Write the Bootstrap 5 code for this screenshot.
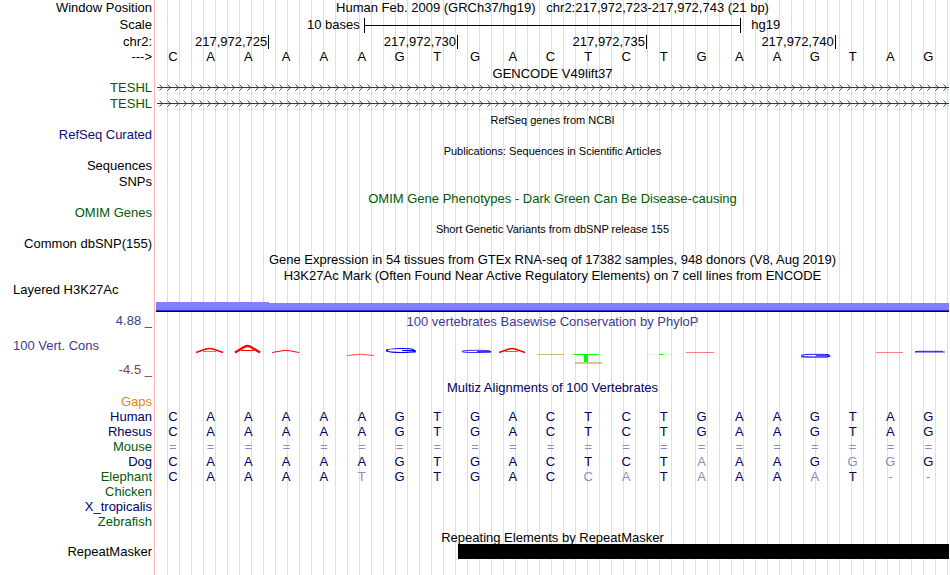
<!DOCTYPE html>
<html lang="en">
  <head>
    <meta charset="UTF-8" />
    <meta name="viewport" content="width=device-width, initial-scale=1.0" />
    <title>Human chr2:217,972,723-217,972,743</title>
    <link
      href="https://cdn.jsdelivr.net/npm/bootstrap@5.3.0/dist/css/bootstrap.min.css"
      rel="stylesheet"
    />
    <style>
      body {
        background: #fff;
        color: #000;
        font-family: "Liberation Sans", Arial, sans-serif;
        font-size: 13px;
        line-height: 14px;
      }
      /* guide lines every 12px, the label column covers its own part */
      .browser {
        background: linear-gradient(to right, #dcdcf8 1px, transparent 1px)
          167px 0 / 12px 100%;
      }
      .track {
        display: flex;
        height: 15px;
        white-space: pre;
      }
      .h-s { height: 14px; }
      .h-m { height: 16px; }
      .h-l { height: 17px; }
      .h-xl { height: 18px; }
      .h-logo { height: 31px; }
      .side {
        flex: 0 0 155px;
        display: flex;
        align-items: center;
        justify-content: flex-end;
        padding-right: 2px;
        background: #fff;
        border-right: 1px solid #ffb4b4;
        box-shadow: 1px 0 #fff;
      }
      .side-left {
        justify-content: flex-start;
        padding-left: 13px;
      }
      .data {
        flex: 1 1 0;
        min-width: 0;
        display: flex;
        align-items: center;
        margin: 0 1px;
      }
      .data svg { display: block; width: 100%; }
      .heading {
        justify-content: center;
        padding-top: 2px;
      }
      .minor {
        font-size: 11px;
        padding-top: 0;
      }
      .bases { margin: 0 3px 0 -1px; }
      .bases span { flex: 1 1 0; text-align: center; }
      .bases .diff { color: #8c8cbe; }
      .navy { color: #000064; }
      .curated { color: #0c0c78; }
      .green { color: #005a0a; }
      .cons { color: #3c3c8c; }
      .minus { color: #8c3c3c; }
      .gaps { color: #e08a10; }
      .pad-scale { width: calc(100% * 5.5 / 21); }
      .scale-name { padding-left: 10px; }
      .scale-bar {
        width: calc(100% * 10 / 21);
        height: 15px;
        border: solid #000;
        border-width: 0 1px;
        background: linear-gradient(#000, #000) center / 100% 1px no-repeat;
      }
      .tick {
        width: calc(100% * 5 / 21);
        height: 14px;
        padding-right: 1px;
        border-right: 1px solid #000;
        text-align: right;
      }
      .tick-first { width: calc(100% * 3 / 21); }
      .signal { align-items: flex-end; }
      .signal div {
        height: 9px;
        flex: 18 1 0;
        background: #8080ff;
        border-bottom: 1px solid #100040;
        box-shadow: inset 0 -1px #2828d0;
      }
      .signal .peak { height: 10px; flex-grow: 3; }
      .repeat-gap { flex: 8 1 0; }
      .repeat { flex: 13 1 0; height: 15px; background: #000; }
    </style>
  </head>
  <body>
    <main class="browser d-flex flex-column min-vh-100">
      <div class="track h-m">
        <div class="side">Window Position</div>
        <div class="data heading pt-0">Human Feb. 2009 (GRCh37/hg19)   chr2:217,972,723-217,972,743 (21 bp)</div>
      </div>
      <div class="track h-xl">
        <div class="side">Scale</div>
        <div class="data">
          <div class="pad-scale text-end pe-1">10 bases</div>
          <div class="scale-bar"></div>
          <div class="pad-scale scale-name">hg19</div>
        </div>
      </div>
      <div class="track">
        <div class="side">chr2:</div>
        <div class="data">
          <div class="tick tick-first">217,972,725</div>
          <div class="tick">217,972,730</div>
          <div class="tick">217,972,735</div>
          <div class="tick">217,972,740</div>
        </div>
      </div>
      <div class="track h-m">
        <div class="side">---&gt;</div>
        <div class="data bases" data-seq="CAAAAAGTGACTCTGAAGTAG"></div>
      </div>
      <div class="track">
        <div class="side"></div>
        <div class="data heading">GENCODE V49lift37</div>
      </div>
      <div class="track h-m">
        <div class="side green">TESHL</div>
        <div class="data align-items-start">
          <svg height="15" aria-hidden="true">
            <defs>
              <pattern id="strand" width="8" height="15" patternUnits="userSpaceOnUse">
                <path d="M3.500 4.500l3 3l-3 3" fill="none" stroke="#005a0a" stroke-width=".9" />
              </pattern>
            </defs>
            <rect width="100%" height="15" fill="url(#strand)" />
            <rect x="1" y="7" width="100%" height="1" fill="#005a0a" />
          </svg>
        </div>
      </div>
      <div class="track">
        <div class="side green">TESHL</div>
        <div class="data align-items-start">
          <svg height="15" aria-hidden="true">
            <rect width="100%" height="15" fill="url(#strand)" />
            <rect x="1" y="7" width="100%" height="1" fill="#005a0a" />
          </svg>
        </div>
      </div>
      <div class="track h-l">
        <div class="side"></div>
        <div class="data heading minor">RefSeq genes from NCBI</div>
      </div>
      <div class="track h-s"><div class="side curated">RefSeq Curated</div></div>
      <div class="track h-l">
        <div class="side"></div>
        <div class="data heading minor">Publications: Sequences in Scientific Articles</div>
      </div>
      <div class="track h-s"><div class="side">Sequences</div></div>
      <div class="track h-l"><div class="side">SNPs</div></div>
      <div class="track h-m">
        <div class="side"></div>
        <div class="data heading green">OMIM Gene Phenotypes - Dark Green Can Be Disease-causing</div>
      </div>
      <div class="track h-s"><div class="side green">OMIM Genes</div></div>
      <div class="track h-l">
        <div class="side"></div>
        <div class="data heading minor">Short Genetic Variants from dbSNP release 155</div>
      </div>
      <div class="track h-s"><div class="side">Common dbSNP(155)</div></div>
      <div class="track h-m">
        <div class="side"></div>
        <div class="data heading">Gene Expression in 54 tissues from GTEx RNA-seq of 17382 samples, 948 donors (V8, Aug 2019)</div>
      </div>
      <div class="track h-m">
        <div class="side"></div>
        <div class="data heading">H3K27Ac Mark (Often Found Near Active Regulatory Elements) on 7 cell lines from ENCODE</div>
      </div>
      <div class="track h-s"><div class="side side-left">Layered H3K27Ac</div></div>
      <div class="track">
        <div class="side"></div>
        <div class="data signal">
          <div class="peak"></div>
          <div></div>
        </div>
      </div>

      <!-- conservation -->
      <div class="track h-xl">
        <div class="side cons">4.88 _</div>
        <div class="data heading cons">100 vertebrates Basewise Conservation by PhyloP</div>
      </div>
      <div class="track h-logo">
        <div class="side side-left cons">100 Vert. Cons</div>
        <div class="data">
          <svg height="31" viewBox="156 330 793 31" preserveAspectRatio="none" overflow="visible" aria-hidden="true">
            <g fill="none" stroke="#f00">
              <path d="M196 352.500l10-3.500q3.500-1 7 0l10 3.500" stroke-width="1.500" />
              <path d="M203 351.500h13" stroke-width=".6" />
              <path d="M235 352.500l10-6q2.500-1 5 0l10 6" stroke-width="2.400" />
              <path d="M241 350.500h13" />
              <path d="M272 352.500l10-1.700q4-.6 8 0l9 1.700" />
              <path d="M347 355.500l10-1q4-.4 8 0l9 1" stroke-width=".7" />
              <path d="M499 352.500l10-3.500q3-1 6 0l10 3.500" stroke-width="1.700" />
              <path d="M505 351.500h13" stroke-width=".7" />
              <path d="M686 352.500h28M876 352.500h27M801 357.500h27" stroke-opacity=".5" />
            </g>
            <g fill="none" stroke="#00f">
              <path d="M414 349.800q-2-1.300-12-1.300q-15 0-15 2t15 2q9 0 13-.8v-1.200h-13" stroke-width="1.200" />
              <path d="M387 349.500v2M414.500 350.500v2" stroke-width="2" />
              <path d="M490 350.800q-3-.5-12-.5q-16 0-16 1.200t16 1q9 0 13-.3v-.7h-14" stroke-width=".8" />
              <path d="M829 354.700q-3-.4-12-.4q-16 0-16 1.400t16 1.200q9 0 13-.4v-.8h-14" stroke-width=".9" />
              <path d="M943 351.300h-24q-4 .2-4 .7h30" stroke-width=".8" />
            </g>
            <g fill="#aaaa32">
              <rect x="537" y="354" width="27" height="1" opacity=".7" />
              <rect x="575" y="362" width="27" height="2" opacity=".6" />
            </g>
            <g fill="#0f0">
              <rect x="573" y="354" width="26" height="1" />
              <rect x="584" y="354" width="4" height="8" />
              <rect x="647" y="354" width="27" height="1" opacity=".15" />
              <rect x="659" y="354" width="4" height="1" />
            </g>
          </svg>
        </div>
      </div>
      <div class="track h-xl"><div class="side minus">-4.5 _</div></div>

      <!-- multiple alignment -->
      <div class="track">
        <div class="side"></div>
        <div class="data heading navy">Multiz Alignments of 100 Vertebrates</div>
      </div>
      <div class="track"><div class="side gaps">Gaps</div></div>
      <div class="track">
        <div class="side navy">Human</div>
        <div class="data bases navy" data-seq="CAAAAAGTGACTCTGAAGTAG"></div>
      </div>
      <div class="track">
        <div class="side navy">Rhesus</div>
        <div class="data bases navy" data-seq="CAAAAAGTGACTCTGAAGTAG"></div>
      </div>
      <div class="track">
        <div class="side green">Mouse</div>
        <div class="data bases navy" data-seq="====================="></div>
      </div>
      <div class="track">
        <div class="side navy">Dog</div>
        <div class="data bases navy" data-seq="CAAAAAGTGACTCTaAAGggG"></div>
      </div>
      <div class="track">
        <div class="side green">Elephant</div>
        <div class="data bases navy" data-seq="CAAAAtGTGACcaTaAAaT--"></div>
      </div>
      <div class="track"><div class="side green">Chicken</div></div>
      <div class="track"><div class="side navy">X_tropicalis</div></div>
      <div class="track"><div class="side green">Zebrafish</div></div>
      <div class="track">
        <div class="side"></div>
        <div class="data heading">Repeating Elements by RepeatMasker</div>
      </div>
      <div class="track">
        <div class="side">RepeatMasker</div>
        <div class="data">
          <div class="repeat-gap"></div>
          <div class="repeat"></div>
        </div>
      </div>
      <div class="track flex-fill h-auto"><div class="side"></div></div>
    </main>

    <script src="https://cdn.jsdelivr.net/npm/bootstrap@5.3.0/dist/js/bootstrap.bundle.min.js"></script>
    <script>
      // one cell per base; lower case, = and - are drawn pale
      document.querySelectorAll("[data-seq]").forEach((row) => {
        for (const base of row.dataset.seq) {
          const cell = document.createElement("span");
          cell.textContent = base.toUpperCase();
          if (/[a-z=-]/.test(base)) cell.className = "diff";
          row.appendChild(cell);
        }
      });
    </script>
  </body>
</html>
